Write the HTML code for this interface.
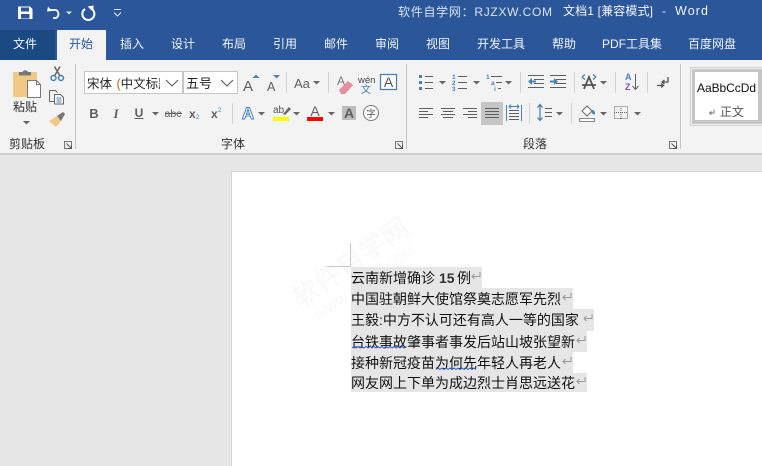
<!DOCTYPE html>
<html lang="zh-CN"><head><meta charset="utf-8"><title>文档1 - Word</title>
<style>
html,body{margin:0;padding:0;width:762px;height:466px;overflow:hidden;background:#e6e6e6}
svg{display:block;position:absolute;left:0;top:0}
.ui{font-family:"Liberation Sans","Noto Sans CJK SC",sans-serif}
.tab{font-size:12px;fill:#f2f5fa;text-anchor:middle}
.lab{font-size:12px;fill:#333;text-anchor:middle}
.doc{font-family:"Liberation Sans","WenQuanYi Zen Hei","Noto Sans CJK SC",sans-serif;font-size:14px;fill:#111}
.g{fill:#5f5f5f}.b{fill:#4a80b8}
.sl{stroke:#5f5f5f;fill:none}
.bl{stroke:#4a80b8;fill:none}
</style></head><body>
<svg width="762" height="466" viewBox="0 0 762 466" class="ui">
<defs>
<path id="ar" d="M0 0h7l-3.500 3.500z" fill="#666"/>
<g id="lau"><rect x="0.500" y="0.500" width="7" height="7" fill="none" stroke="#777"/><path d="M2.500 2.500l5 5M4 7.500h3.500V4" stroke="#555" fill="none"/></g>
<path id="ret" d="M10 1v4.500H2M4.500 3L2 5.500 4.500 8" fill="none" stroke="#999" stroke-width="1"/>
</defs>
<!-- chrome -->
<rect width="762" height="60" fill="#2b579a"/>
<rect y="60" width="762" height="93" fill="#f3f3f3"/>
<rect y="153" width="762" height="2" fill="#cfcfcf"/>
<rect y="155" width="762" height="311" fill="#e6e6e6"/>
<rect x="232" y="172" width="530" height="294" fill="#fff"/>
<rect x="231" y="171" width="531" height="1" fill="#d4d4d4"/><rect x="231" y="171" width="1" height="295" fill="#d4d4d4"/>
<!-- QAT -->
<path d="M18 6.500h12l2.500 2.500v10H18z" fill="#fff"/>
<rect x="21" y="7.500" width="8" height="4" fill="#2b579a"/><rect x="21" y="14" width="8.500" height="4.500" fill="#2b579a"/>
<path d="M48 6.500L47 11.500l5-.5z" fill="#fff"/>
<path d="M49 10h7a4.500 4.500 0 0 1 0 8h-3" fill="none" stroke="#fff" stroke-width="1.800"/>
<path d="M66 11.500h6l-3 3z" fill="#dfe7f3"/>
<path d="M85 9a6 6 0 1 0 5-.8" fill="none" stroke="#fff" stroke-width="2"/><path d="M93.500 5.500v6l-6-5z" fill="#fff"/>
<path d="M114 9.500h7M114 12.500l3.500 3.500 3.500-3.500" fill="none" stroke="#dfe7f3"/>
<text class="tab" x="398" y="16" style="text-anchor:start;fill:#d9e2f0" textLength="154">软件自学网：RJZXW.COM</text>
<text class="tab" x="563" y="15" style="text-anchor:start" textLength="90">文档1 [兼容模式]</text>
<text class="tab" x="662" y="15" style="text-anchor:start">-</text>
<text x="675" y="15" font-size="12.500" fill="#f2f5fa" textLength="33">Word</text>
<!-- tabs -->
<rect x="0" y="30" width="55" height="30" fill="#1b4a82"/>
<rect x="57" y="30" width="49" height="30" fill="#f3f3f3"/>
<g>
<text class="tab" x="25" y="48">文件</text>
<text class="tab" x="81" y="48" style="fill:#2b579a">开始</text>
<text class="tab" x="132" y="48">插入</text>
<text class="tab" x="183" y="48">设计</text>
<text class="tab" x="234" y="48">布局</text>
<text class="tab" x="285" y="48">引用</text>
<text class="tab" x="336" y="48">邮件</text>
<text class="tab" x="387" y="48">审阅</text>
<text class="tab" x="438" y="48">视图</text>
<text class="tab" x="501" y="48">开发工具</text>
<text class="tab" x="564" y="48">帮助</text>
<text class="tab" x="632" y="48">PDF工具集</text>
<text class="tab" x="712" y="48">百度网盘</text>
</g>
<!-- group separators -->
<g fill="#c4c4c4">
<rect x="75" y="64" width="1" height="85"/><rect x="406" y="64" width="1" height="85"/><rect x="680" y="64" width="1" height="85"/>
</g>
<g fill="#d2d2d2">
<rect x="286" y="72" width="1" height="21"/><rect x="328" y="72" width="1" height="21"/>
<rect x="232" y="103" width="1" height="21"/>
<rect x="520" y="72" width="1" height="21"/><rect x="574" y="72" width="1" height="21"/><rect x="615" y="72" width="1" height="21"/><rect x="647" y="72" width="1" height="21"/>
<rect x="529" y="103" width="1" height="21"/><rect x="571" y="103" width="1" height="21"/>
</g>
<!-- clipboard -->
<rect x="13" y="72" width="24" height="25" rx="1" fill="#efc985"/>
<path d="M19 72h3.500a3 3 0 0 1 5.500 0h3v3.500H19z" fill="#777"/>
<path d="M27.500 80.500h9l4 4v13h-13z" fill="#fff" stroke="#777"/><path d="M36.500 80.500v4h4" fill="none" stroke="#777"/>
<text class="lab" x="25" y="111">粘贴</text>
<use href="#ar" x="23" y="121"/>
<circle cx="53.500" cy="78" r="2.500" fill="none" stroke="#4a80b8" stroke-width="1.500"/><circle cx="61" cy="78" r="2.500" fill="none" stroke="#4a80b8" stroke-width="1.500"/>
<path d="M54.500 76L60 66.500M60 76L54.500 66.500" stroke="#666" stroke-width="1.500" fill="none"/>
<path d="M49.500 90.500h6l2 2M49.500 90.500v11h5" fill="none" stroke="#666"/>
<path d="M54.500 94.500h6l3 3v6.500h-9z" fill="#fff" stroke="#666"/><path d="M56.500 98h5M56.500 100h5M56.500 102h5" stroke="#4a80b8"/>
<path d="M49 121l8-5 4 5-5 6z" fill="#efc985"/><path d="M57 116l6-4 2 2-4 7z" fill="#777"/>
<text class="lab" x="27" y="148">剪贴板</text>
<use href="#lau" x="64" y="141"/>
<!-- font combo -->
<rect x="84.500" y="71.500" width="98" height="22" fill="#fff" stroke="#c6c6c6"/>
<rect x="183.500" y="71.500" width="54" height="22" fill="#fff" stroke="#c6c6c6"/>
<svg x="86" y="72" width="74" height="21"><text x="1" y="16" font-size="12.500" fill="#222" font-family="Liberation Sans,WenQuanYi Zen Hei,Noto Sans CJK SC,sans-serif">宋体 <tspan fill="#a86a20" dx="1">(</tspan>中文标题</text></svg>
<text x="186" y="88" font-size="13" fill="#222">五号</text>
<path d="M166 80l6 6 6-6M221 80l6 6 6-6" fill="none" stroke="#555"/>
<!-- font row 1 -->
<text x="243" y="91" font-size="15" class="g">A</text><path d="M252.500 78h7l-3.500-3.500z" fill="#4a80b8"/>
<text x="267" y="91" font-size="12.500" class="g">A</text><path d="M273 75h7l-3.500 3.500z" fill="#4a80b8"/>
<text x="294" y="88" font-size="13" class="g">Aa</text><use href="#ar" x="313" y="81"/>
<text x="337" y="85" font-size="12" fill="#777">A</text><path d="M339 90l9-9 5 4-8 9h-4z" fill="#e88d9b"/>
<text x="358" y="83" font-size="9.500" fill="#444">wén</text><text x="361" y="93" font-size="10" fill="#4a80b8">文</text>
<rect x="380.500" y="74.500" width="16" height="15" fill="#fff" stroke="#4a80b8" stroke-width="1.300"/><text x="388.500" y="87" text-anchor="middle" font-size="14" fill="#555">A</text>
<!-- font row 2 -->
<text x="94" y="118" text-anchor="middle" font-size="13" font-weight="bold" class="g">B</text>
<text x="116" y="118" text-anchor="middle" font-size="13" font-style="italic" font-weight="bold" class="g" font-family="Liberation Serif,serif">I</text>
<text x="139" y="117" text-anchor="middle" font-size="12" font-weight="bold" class="g">U</text><rect x="134.500" y="118" width="9" height="1" fill="#5f5f5f"/>
<use href="#ar" x="152" y="112"/>
<text x="173" y="117" text-anchor="middle" font-size="10.500" class="g">abc</text><rect x="165" y="113" width="17" height="1" fill="#5f5f5f"/>
<text x="189" y="118" font-size="12" font-weight="bold" class="g">x</text><text x="196" y="119" font-size="6" class="b">2</text>
<text x="211" y="118" font-size="12" font-weight="bold" class="g">x</text><text x="218" y="112" font-size="6" class="b">2</text>
<text x="248" y="119" text-anchor="middle" font-size="17" font-weight="bold" fill="#fff" stroke="#4a80b8" stroke-width="1">A</text><use href="#ar" x="258" y="112"/>
<text x="273" y="113" font-size="10" fill="#555">ab</text><path d="M283 114l6-7 2 2-6 6z" fill="#666"/><rect x="273" y="117" width="16" height="4" fill="#ff0"/><use href="#ar" x="293" y="112"/>
<text x="315" y="116" text-anchor="middle" font-size="14" class="g">A</text><rect x="307" y="117" width="16" height="4" fill="#f00"/><use href="#ar" x="328" y="112"/>
<rect x="342" y="106" width="14" height="14" fill="#bdbdbd"/><text x="349" y="118" text-anchor="middle" font-size="14" font-weight="bold" class="g">A</text>
<circle cx="371" cy="113" r="7.500" fill="#fff" stroke="#777"/><text x="371" y="117" text-anchor="middle" font-size="9.500" fill="#555">字</text>
<text class="lab" x="233" y="148">字体</text>
<use href="#lau" x="395" y="141"/>
<!-- paragraph row 1 -->
<g fill="#4a80b8"><rect x="419" y="75" width="3" height="3"/><rect x="419" y="81" width="3" height="3"/><rect x="419" y="87" width="3" height="3"/></g>
<path d="M425 76.500h8M425 82.500h8M425 88.500h8" class="sl"/><use href="#ar" x="439" y="81"/>
<text x="452" y="79" font-size="6.500" font-weight="bold" class="b">1</text><text x="452" y="85" font-size="6.500" font-weight="bold" class="b">2</text><text x="452" y="91" font-size="6.500" font-weight="bold" class="b">3</text>
<path d="M458 76.500h9M458 82.500h9M458 88.500h9" class="sl"/><use href="#ar" x="473" y="81"/>
<text x="486" y="79" font-size="6.500" font-weight="bold" class="b">1</text><text x="491" y="85" font-size="6.500" font-weight="bold" class="b">a</text><text x="494" y="91" font-size="6.500" font-weight="bold" class="b">i</text>
<path d="M491 76.500h11M496 82.500h6M498 88.500h3" class="sl"/><use href="#ar" x="505" y="81"/>
<path d="M528 75.500h16M534 79.500h10M534 83.500h10M528 87.500h16" class="sl"/><path d="M528 81.500l4-3.500v2.500h4v2h-4V85z" fill="#4a80b8"/>
<path d="M550 75.500h16M556 79.500h10M556 83.500h10M550 87.500h16" class="sl"/><path d="M558 81.500l-4-3.500v2.500h-4v2h4V85z" fill="#4a80b8"/>
<path d="M584 89l5-12 5 12M582 85h14" fill="none" stroke="#555" stroke-width="1.800"/><path d="M582 77l3-2.500M582 77l3 2.500M596 77l-3-2.500M596 77l-3 2.500" class="bl" stroke-width="1.300"/><use href="#ar" x="600" y="81"/>
<text x="625" y="80" font-size="9" font-weight="bold" class="b">A</text><text x="625" y="90" font-size="9" font-weight="bold" fill="#8a4bb0">Z</text>
<path d="M635.500 74v15M632.500 86l3 3.500 3-3.500" class="sl"/>
<path d="M668 77v5h-6M664.500 80l-2.500 2 2.500 2" fill="none" stroke="#555" stroke-width="1.300"/><path d="M657 85.500h6M661 83.500l2.500 2-2.500 2" fill="none" stroke="#555" stroke-width="1.300"/>
<!-- paragraph row 2 -->
<path d="M419 108.500h14M419 111.500h9M419 114.500h14M419 117.500h9" class="sl"/>
<path d="M441 108.500h14M443 111.500h10M441 114.500h14M443 117.500h10" class="sl"/>
<path d="M463 108.500h14M468 111.500h9M463 114.500h14M468 117.500h9" class="sl"/>
<rect x="481" y="102" width="22" height="23" fill="#c6c6c6"/>
<path d="M485 108.500h14M485 111.500h14M485 114.500h14M485 117.500h14" class="sl"/>
<path d="M506.500 105v16M521.500 105v16" class="bl"/><path d="M509 106.500h10M511 104.500l-2 2 2 2M517 104.500l2 2-2 2" class="bl"/>
<path d="M509 110.500h10M509 113.500h10M509 116.500h10M509 119.500h10" class="sl"/>
<path d="M540 105v15M537.500 107.500l2.500-3 2.500 3M537.500 117.500l2.500 3 2.500-3" class="bl" stroke-width="1.300"/>
<path d="M545 108.500h7M545 112.500h7M545 116.500h7" class="sl"/><use href="#ar" x="556" y="112"/>
<rect x="579.500" y="118.500" width="15" height="3" fill="#fff" stroke="#888"/>
<path d="M582 111l5-5 5 5-5 5z" fill="#fff" stroke="#666"/><path d="M591 110a3 3 0 0 1 3 5l-2-2z" fill="#4a80b8"/><use href="#ar" x="600" y="112"/>
<rect x="614.500" y="106.500" width="13" height="12" fill="none" stroke="#666" stroke-dasharray="1 1"/><path d="M621 106v13M614 112.500h14" stroke="#666" stroke-dasharray="1 1"/><use href="#ar" x="634" y="112"/>
<text class="lab" x="535" y="148">段落</text>
<use href="#lau" x="669" y="141"/>
<!-- styles -->
<rect x="690.500" y="67.500" width="80" height="58" fill="#f3f3f3" stroke="#cfcfcf"/>
<rect x="692" y="69" width="72" height="55" fill="#c6c6c6"/>
<rect x="695" y="72" width="63" height="48" fill="#fff"/>
<text x="697" y="92" font-size="12" fill="#111" textLength="59">AaBbCcDd</text>
<path d="M714 109.500v3.500h-4M711.500 111.500l-2 1.500 2 1.500" fill="none" stroke="#777"/>
<text x="720" y="116" font-size="12" fill="#555">正文</text>
<!-- watermark -->
<g transform="rotate(-35 350 262)" fill="#f8f8f8">
<text x="350" y="272" text-anchor="middle" font-size="27">软件自学网</text>
<text x="350" y="292" text-anchor="middle" font-size="13">WWW.RJZXW.COM</text>
</g>
<!-- margin mark -->
<rect x="350" y="243" width="1" height="24" fill="#c8c8c8"/><rect x="327" y="266" width="24" height="1" fill="#c8c8c8"/>
<!-- selected text -->
<g fill="#e6e6e6">
<rect x="351" y="267" width="131" height="21"/>
<rect x="351" y="288" width="222" height="21"/>
<rect x="351" y="309" width="243" height="22"/>
<rect x="351" y="331" width="236" height="21"/>
<rect x="351" y="352" width="222" height="21"/>
<rect x="351" y="373" width="236" height="19"/>
</g>
<g class="doc">
<text x="351" y="283">云南新增确诊</text><text x="439" y="283" font-size="14" font-weight="bold" fill="#333">15</text><text x="457" y="283">例</text>
<text x="351" y="304">中国驻朝鲜大使馆祭奠志愿军先烈</text>
<text x="351" y="325">王毅:中方不认可还有高人一等的国家</text>
<text x="351" y="347">台铁事故肇事者事发后站山坡张望新</text>
<text x="351" y="368">接种新冠疫苗为何先年轻人再老人</text>
<text x="351" y="388">网友网上下单为成边烈士肖思远送花</text>
</g>
<use href="#ret" x="470" y="271"/><use href="#ret" x="561" y="292"/><use href="#ret" x="582" y="313"/>
<use href="#ret" x="575" y="335"/><use href="#ret" x="561" y="356"/><use href="#ret" x="575" y="376"/>
<path d="M352 348l2-1.500 2 1.500 2-1.500 2 1.500 2-1.500 2 1.500 2-1.500 2 1.500 2-1.500 2 1.500 2-1.500 2 1.500 2-1.500 2 1.500 2-1.500 2 1.500 2-1.500 2 1.500 2-1.500 2 1.500 2-1.500 2 1.500 2-1.500 2 1.500 2-1.500 2 1.500 2-1.500" fill="none" stroke="#3a5fc8"/>
<path d="M436 369.500l2-1.500 2 1.500 2-1.500 2 1.500 2-1.500 2 1.500 2-1.500 2 1.500 2-1.500 2 1.500 2-1.500 2 1.500 2-1.500 2 1.500 2-1.500 2 1.500 2-1.500 2 1.500 2-1.500 2 1.500" fill="none" stroke="#3a5fc8"/>
</svg>
</body></html>
